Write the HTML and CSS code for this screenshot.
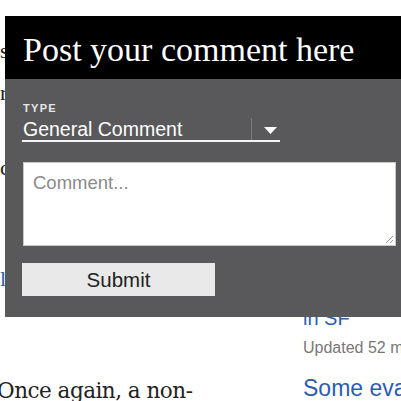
FILE: index.html
```html
<!DOCTYPE html>
<html>
<head>
<meta charset="utf-8">
<link rel="stylesheet" href="styles.css">
</head>
<body>
<div class="page">
  <div class="article">
    <p class="line l1">since the bay</p>
    <p class="line l2">rents that rise</p>
    <p class="line l3">costs of living</p>
    <p class="line link l4">learn more</p>
    <p class="lead">Once again, a non-</p>
  </div>
  <div class="sidebar">
    <p class="side-link s1">in SF</p>
    <p class="updated">Updated 52 min ago</p>
    <p class="side-link s2">Some evacuees</p>
  </div>
</div>

<div class="modal">
  <div class="modal-head">Post your comment here</div>
  <div class="modal-body">
    <div class="field">
      <div class="label">TYPE</div>
      <div class="select">
        <span class="select-value">General Comment</span>
        <span class="select-divider"></span>
        <svg class="caret" width="13" height="7" viewBox="0 0 13 7"><path d="M0 0 H13 L6.5 7 Z" fill="#fff"/></svg>
      </div>
    </div>
    <div class="textarea">
      <span class="placeholder">Comment...</span>
      <svg class="grip" width="10" height="10" viewBox="0 0 10 10"><path d="M9 2 L2 9 M9 6 L6 9" stroke="#999" stroke-width="1" fill="none"/></svg>
    </div>
    <button class="submit">Submit</button>
  </div>
</div>
</body>
</html>
```

FILE: styles.css
```css
html, body {
  margin: 0;
  padding: 0;
  background: #fff;
  width: 401px;
  height: 401px;
  overflow: hidden;
}
.page {
  display: flex;
  width: 401px;
  height: 401px;
  overflow: hidden;
}
.article {
  width: 303px;
  flex: none;
  font-family: "Liberation Serif", serif;
  color: #222;
}
.line {
  margin: 0;
  font-size: 22px;
  line-height: 26px;
  white-space: nowrap;
}
.l1 { margin-top: 38px; }
.l2 { margin-top: 16px; }
.l3 { margin-top: 49px; }
.link { color: #2a5db0; }
.l4 { margin-top: 85px; }
.lead {
  margin: 0;
  margin-top: 86px;
  margin-left: -3px;
  font-family: "DejaVu Serif", serif;
  font-size: 21.5px;
  line-height: 26px;
  white-space: nowrap;
  letter-spacing: -0.5px;
}
.sidebar {
  flex: none;
  width: 98px;
  overflow: hidden;
  font-family: "Liberation Sans", Arial, sans-serif;
}
.side-link {
  margin: 0;
  color: #2a5db0;
  white-space: nowrap;
}
.s1 {
  font-size: 20px;
  line-height: 24px;
  margin-top: 306px;
}
.updated {
  margin: 8px 0 0;
  font-size: 16px;
  line-height: 20px;
  color: #777;
  white-space: nowrap;
}
.s2 {
  font-size: 23px;
  line-height: 26px;
  margin-top: 17px;
}

.modal {
  position: absolute;
  left: 5px;
  top: 16px;
  width: 396px;
  height: 301px;
  display: flex;
  flex-direction: column;
  background: #59595b;
}
.modal-head {
  background: #000;
  color: #fff;
  height: 63px;
  flex: none;
  box-sizing: border-box;
  padding: 16px 0 0 18px;
  font-family: "Liberation Serif", serif;
  font-size: 34px;
  line-height: 36px;
  white-space: nowrap;
}
.modal-body {
  padding: 22px 0 0 18px;
  display: flex;
  flex-direction: column;
}
.label {
  font-family: "Liberation Sans", Arial, sans-serif;
  font-size: 11px;
  font-weight: bold;
  letter-spacing: 1.3px;
  color: #e6e6e6;
  line-height: 14px;
}
.select {
  width: 258px;
  height: 27px;
  box-sizing: border-box;
  border-bottom: 2px solid #f4f4f4;
  display: flex;
  align-items: flex-end;
  margin-left: -1px;
}
.select-value {
  font-family: "Liberation Sans", Arial, sans-serif;
  font-size: 19.5px;
  line-height: 22px;
  color: #fff;
  padding-left: 1px;
  width: 228px;
  flex: none;
  white-space: nowrap;
}
.select-divider {
  width: 1px;
  height: 22px;
  background: #7a7a7a;
  flex: none;
}
.caret {
  margin: 0 0 6px 12px;
  flex: none;
}
.textarea {
  margin-top: 20px;
  width: 373px;
  height: 84px;
  box-sizing: border-box;
  background: #fff;
  border: 1px solid #c8c8c8;
  position: relative;
  padding: 9px 0 0 9px;
}
.placeholder {
  font-family: "Liberation Sans", Arial, sans-serif;
  font-size: 18.5px;
  line-height: 22px;
  color: #8a8a8a;
}
.grip {
  position: absolute;
  right: 1px;
  bottom: 1px;
}
.submit {
  margin-top: 17px;
  margin-left: -1px;
  width: 193px;
  height: 33px;
  border: none;
  background: #e9e9e9;
  font-family: "Liberation Sans", Arial, sans-serif;
  font-size: 20.5px;
  color: #222;
  padding: 0;
}
```
